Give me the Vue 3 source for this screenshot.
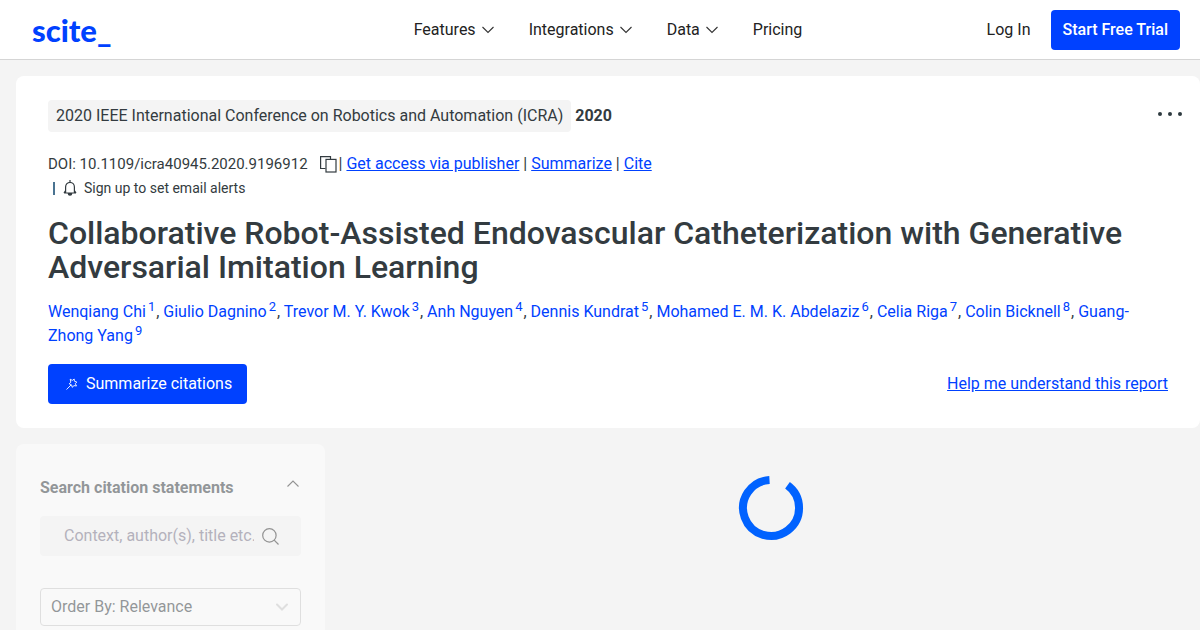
<template>
  <div class="page">
    <header class="navbar">
      <a class="logo" href="#">scite_</a>
      <nav class="menu">
        <a v-for="item in menu" :key="item.label" href="#">
          {{ item.label }}
          <svg v-if="item.dropdown" width="12" height="8" viewBox="0 0 12 8">
            <path d="M0.5 1L6 6.5L11.5 1" fill="none" stroke="#333" stroke-width="1.1" />
          </svg>
        </a>
      </nav>
      <div class="account">
        <a href="#">Log In</a>
        <button class="trial">Start Free Trial</button>
      </div>
    </header>

    <main>
      <section class="card">
        <div class="journal-row">
          <div><span class="journal">2020 IEEE International Conference on Robotics and Automation (ICRA)</span> <b>2020</b></div>
          <button class="more" aria-label="More options">
            <svg width="24" height="4" viewBox="0 0 24 4" fill="#2f3a40">
              <circle cx="2" cy="2" r="2" />
              <circle cx="12" cy="2" r="2" />
              <circle cx="22" cy="2" r="2" />
            </svg>
          </button>
        </div>

        <div class="card-body">
          <div class="doi">
            <span class="doi-number">DOI: 10.1109/icra40945.2020.9196912</span>
            <button class="copy" aria-label="Copy DOI">
              <svg width="17" height="17" viewBox="0 0 17 17" fill="none" stroke="#333b40" stroke-width="1.2">
                <path d="M5.5 12.5H0.6V0.6H10.5V3" />
                <rect x="6" y="3.4" width="10" height="12.6" />
              </svg>
            </button>
            <span>| <a href="#">Get access via publisher</a> | <a href="#">Summarize</a> | <a href="#">Cite</a></span>
          </div>
          <div class="alerts">
            <i></i>
            <button>
              <svg width="14" height="16" viewBox="0 0 14 16" fill="none" stroke="#333b40" stroke-width="1.2">
                <path d="M7 0V2M1 13H13M2.6 13V7A4.4 4.7 0 0 1 11.4 7V13M2.6 10.5L1 13M11.4 10.5L13 13" />
                <path d="M5.3 13.5A1.7 1.7 0 0 0 8.7 13.5Z" fill="#333b40" />
              </svg>
              Sign up to set email alerts
            </button>
          </div>

          <h1>Collaborative Robot-Assisted Endovascular Catheterization with Generative Adversarial Imitation Learning</h1>

          <p class="authors">
            <template v-for="(author, index) in authors" :key="author"><span v-if="index">, </span><a href="#">{{ author }}<sup>{{ index + 1 }}</sup></a></template>
          </p>

          <div class="actions">
            <button class="summarize">
              <svg width="12" height="12" viewBox="0 0 12 12" fill="none" stroke="#fff" stroke-width="0.9">
                <path d="M0.5 11.5L5 7M4.2 1.2L6.3 2.4L8.2 1L8.4 3.2L10.8 4L9.3 5.7L10.5 8L8 7.6L6.2 9.3L5.6 6.9L3.2 5.8L4.8 4.2Z" />
              </svg>
              Summarize citations
            </button>
            <a href="#">Help me understand this report</a>
          </div>
        </div>
      </section>

      <div class="columns">
        <aside class="filters">
          <div class="filter-title">
            <label for="search">Search citation statements</label>
            <svg width="12" height="7" viewBox="0 0 12 7">
              <path d="M0.5 6.5L6 1L11.5 6.5" fill="none" stroke="#333" stroke-width="1.1" />
            </svg>
          </div>
          <div class="search">
            <input id="search" v-model="query" type="text" placeholder="Context, author(s), title etc.">
            <svg width="17" height="17" viewBox="0 0 17 17" fill="none" stroke="#333" stroke-width="1.2">
              <circle cx="7.4" cy="7.4" r="6.7" />
              <path d="M12.2 12.2L16.5 16.5" />
            </svg>
          </div>
          <div class="order">
            <select v-model="order" aria-label="Order by">
              <option value="relevance">Order By: Relevance</option>
            </select>
            <svg width="12" height="8" viewBox="0 0 12 8">
              <path d="M1 1.5L6 6.5L11 1.5" fill="none" stroke="#ccc" stroke-width="2" stroke-linecap="round" />
            </svg>
          </div>
        </aside>
        <div class="results">
          <svg width="66" height="66" viewBox="0 0 66 66">
            <path d="M49.5 10.3A28 28 0 1 1 31.5 5" fill="none" stroke="#0062ff" stroke-width="8" />
          </svg>
        </div>
      </div>
    </main>
  </div>
</template>

<script setup>
import { ref } from 'vue';

const query = ref('');
const order = ref('relevance');

const menu = [
  { label: 'Features', dropdown: true },
  { label: 'Integrations', dropdown: true },
  { label: 'Data', dropdown: true },
  { label: 'Pricing', dropdown: false }
];

const authors = [
  'Wenqiang Chi',
  'Giulio Dagnino',
  'Trevor M. Y. Kwok',
  'Anh Nguyen',
  'Dennis Kundrat',
  'Mohamed E. M. K. Abdelaziz',
  'Celia Riga',
  'Colin Bicknell',
  'Guang-Zhong Yang'
];
</script>

<style>
body {
  background: #f4f4f4;
}
</style>

<style scoped>
.page {
  height: 100vh;
  overflow: hidden;
  background: #f4f4f4;
  color: #333b40;
  font-family: Roboto, "Liberation Sans", sans-serif;
  font-size: 16px;
  line-height: 24px;
}

* {
  box-sizing: border-box;
}

button, input, select {
  font: inherit;
  color: inherit;
  border: 0;
  padding: 0;
  background: none;
}

button {
  cursor: pointer;
}

svg {
  display: block;
  flex-shrink: 0;
}

a {
  color: #0041ff;
}

.navbar {
  display: grid;
  grid-template-columns: 1fr auto 1fr;
  align-items: center;
  height: 60px;
  padding: 0 20px 0 32px;
  background: #fff;
  border-bottom: 1px solid #d5d5d5;
}

.navbar a {
  color: #222;
  text-decoration: none;
}

.navbar .logo {
  color: #0041ff;
  font-family: Lato, sans-serif;
  font-size: 31px;
  font-weight: 900;
}

.menu {
  display: flex;
  gap: 35px;
  padding-left: 4px;
}

.menu a {
  display: flex;
  align-items: center;
  gap: 6px;
}

.account {
  display: flex;
  align-items: center;
  justify-content: flex-end;
  gap: 20px;
}

.trial {
  height: 40px;
  padding: 0 12px;
  border-radius: 4px;
  background: #0041ff;
  color: #fff;
  font-weight: 500;
}

main {
  padding: 16px 0 0 16px;
}

.card {
  padding: 24px 0 24px 32px;
  border-radius: 8px;
  background: #fff;
}

.journal-row {
  display: flex;
  justify-content: space-between;
  line-height: 32px;
  padding-right: 18px;
}

.journal {
  display: inline-block;
  padding: 0 8px;
  border-radius: 4px;
  background: #f4f4f4;
}

.more {
  display: flex;
  padding-top: 12px;
}

.card-body {
  padding: 20px 32px 0 0;
}

.doi {
  display: flex;
  align-items: center;
}

.doi-number {
  font-size: 15px;
}

.copy {
  margin: 0 2px 0 12px;
}

.alerts {
  display: flex;
  align-items: center;
  gap: 8px;
  padding-left: 5px;
  font-size: 14px;
}

.alerts i {
  width: 2px;
  height: 13px;
  background: #4a7391;
}

.alerts button {
  display: flex;
  align-items: center;
  gap: 7px;
}

h1 {
  margin: 16px 0;
  font-size: 32px;
  font-weight: 500;
  line-height: 34px;
}

.authors {
  margin: 0;
}

.authors a {
  text-decoration: none;
}

sup {
  margin: 0 1px 0 2px;
  font-size: 13px;
  line-height: 0;
}

.actions {
  display: flex;
  align-items: center;
  justify-content: space-between;
  margin-top: 16px;
}

.summarize {
  display: flex;
  align-items: center;
  gap: 8px;
  height: 40px;
  padding: 0 15px 0 18px;
  border-radius: 4px;
  background: #0041ff;
  color: #fff;
}

.columns {
  display: flex;
  gap: 16px;
  margin-top: 16px;
}

.filters {
  width: 309px;
  height: 400px;
  padding: 32px 24px;
  border-radius: 8px;
  background: #fff;
  opacity: 0.5;
}

.filter-title {
  display: flex;
  justify-content: space-between;
  padding: 0 2px 16px 0;
  font-weight: 700;
}

.filter-title svg {
  margin-top: 4px;
}

.search {
  display: flex;
  align-items: center;
  gap: 8px;
  height: 40px;
  padding: 0 22px 0 24px;
  border-radius: 4px;
  background: #f4f4f4;
}

.search input {
  flex: 1;
  min-width: 0;
  outline: none;
}

.search input::placeholder {
  color: #757085;
  opacity: 1;
}

.order {
  position: relative;
  margin-top: 32px;
}

.order select {
  width: 100%;
  height: 38px;
  padding: 0 10px;
  border: 1px solid #ccc;
  border-radius: 4px;
  appearance: none;
}

.order svg {
  position: absolute;
  top: 15px;
  right: 13px;
}

.results {
  flex: 1;
  display: flex;
  justify-content: center;
  padding-top: 31px;
}
</style>
